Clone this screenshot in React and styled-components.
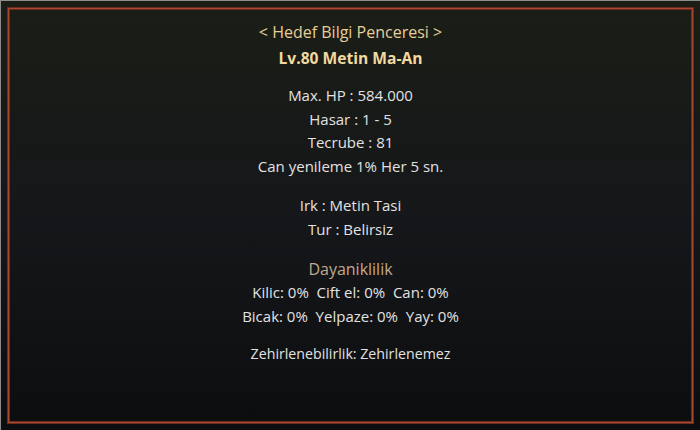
import React from "react";
import styled, { createGlobalStyle } from "styled-components";

const Global = createGlobalStyle`
  html, body { margin: 0; padding: 0; background: #0c0d0f; }
  body { font-family: "Open Sans", "Noto Sans", sans-serif; }
`;

const Window = styled.div`
  box-sizing: border-box;
  width: 700px;
  height: 430px;
  padding: 6px;
  border-top: 1px solid #8c8c8c;
  border-left: 1px solid #8c8c8c;
  background: linear-gradient(to bottom, #1b1d16 0%, #15171a 50%, #0c0d0f 100%);
`;

const Frame = styled.div`
  box-sizing: border-box;
  height: 100%;
  border: 1px solid #6a2c1e;
  box-shadow: inset 0 0 0 1px #a9482f, inset 0 0 0 2px #6a2c1e;
  padding: 13px 0 0;
  display: flex;
  flex-direction: column;
  align-items: center;
`;

const Section = styled.div`
  display: flex;
  flex-direction: column;
  align-items: center;
  gap: ${(p) => p.$gap || 0}px;
  margin-top: ${(p) => p.$top || 0}px;
`;

const Line = styled.div`
  font-size: ${(p) => p.$size || 15}px;
  line-height: ${(p) => p.$lh || 23.5}px;
  font-weight: ${(p) => (p.$bold ? 700 : 400)};
  color: ${(p) => p.$color || "#e2e2e2"};
  white-space: pre;
`;

export default function App() {
  return (
    <>
      <Global />
      <Window>
        <Frame>
          <Section $gap={2}>
            <Line $size={16} $color="#e6cf98">{"< Hedef Bilgi Penceresi >"}</Line>
            <Line $size={15.6} $bold $color="#f1d9a0">Lv.80 Metin Ma-An</Line>
          </Section>
          <Section $top={14}>
            <Line>Max. HP : 584.000</Line>
            <Line>Hasar : 1 - 5</Line>
            <Line>Tecrube : 81</Line>
            <Line>Can yenileme 1% Her 5 sn.</Line>
          </Section>
          <Section $top={16}>
            <Line>Irk : Metin Tasi</Line>
            <Line>Tur : Belirsiz</Line>
          </Section>
          <Section $top={16}>
            <Line $size={16} $lh={24} $color="#c4a98b">Dayaniklilik</Line>
            <Line>{"Kilic: 0%  Cift el: 0%  Can: 0%"}</Line>
            <Line>{"Bicak: 0%  Yelpaze: 0%  Yay: 0%"}</Line>
          </Section>
          <Section $top={14}>
            <Line $size={14.2}>Zehirlenebilirlik: Zehirlenemez</Line>
          </Section>
        </Frame>
      </Window>
    </>
  );
}
